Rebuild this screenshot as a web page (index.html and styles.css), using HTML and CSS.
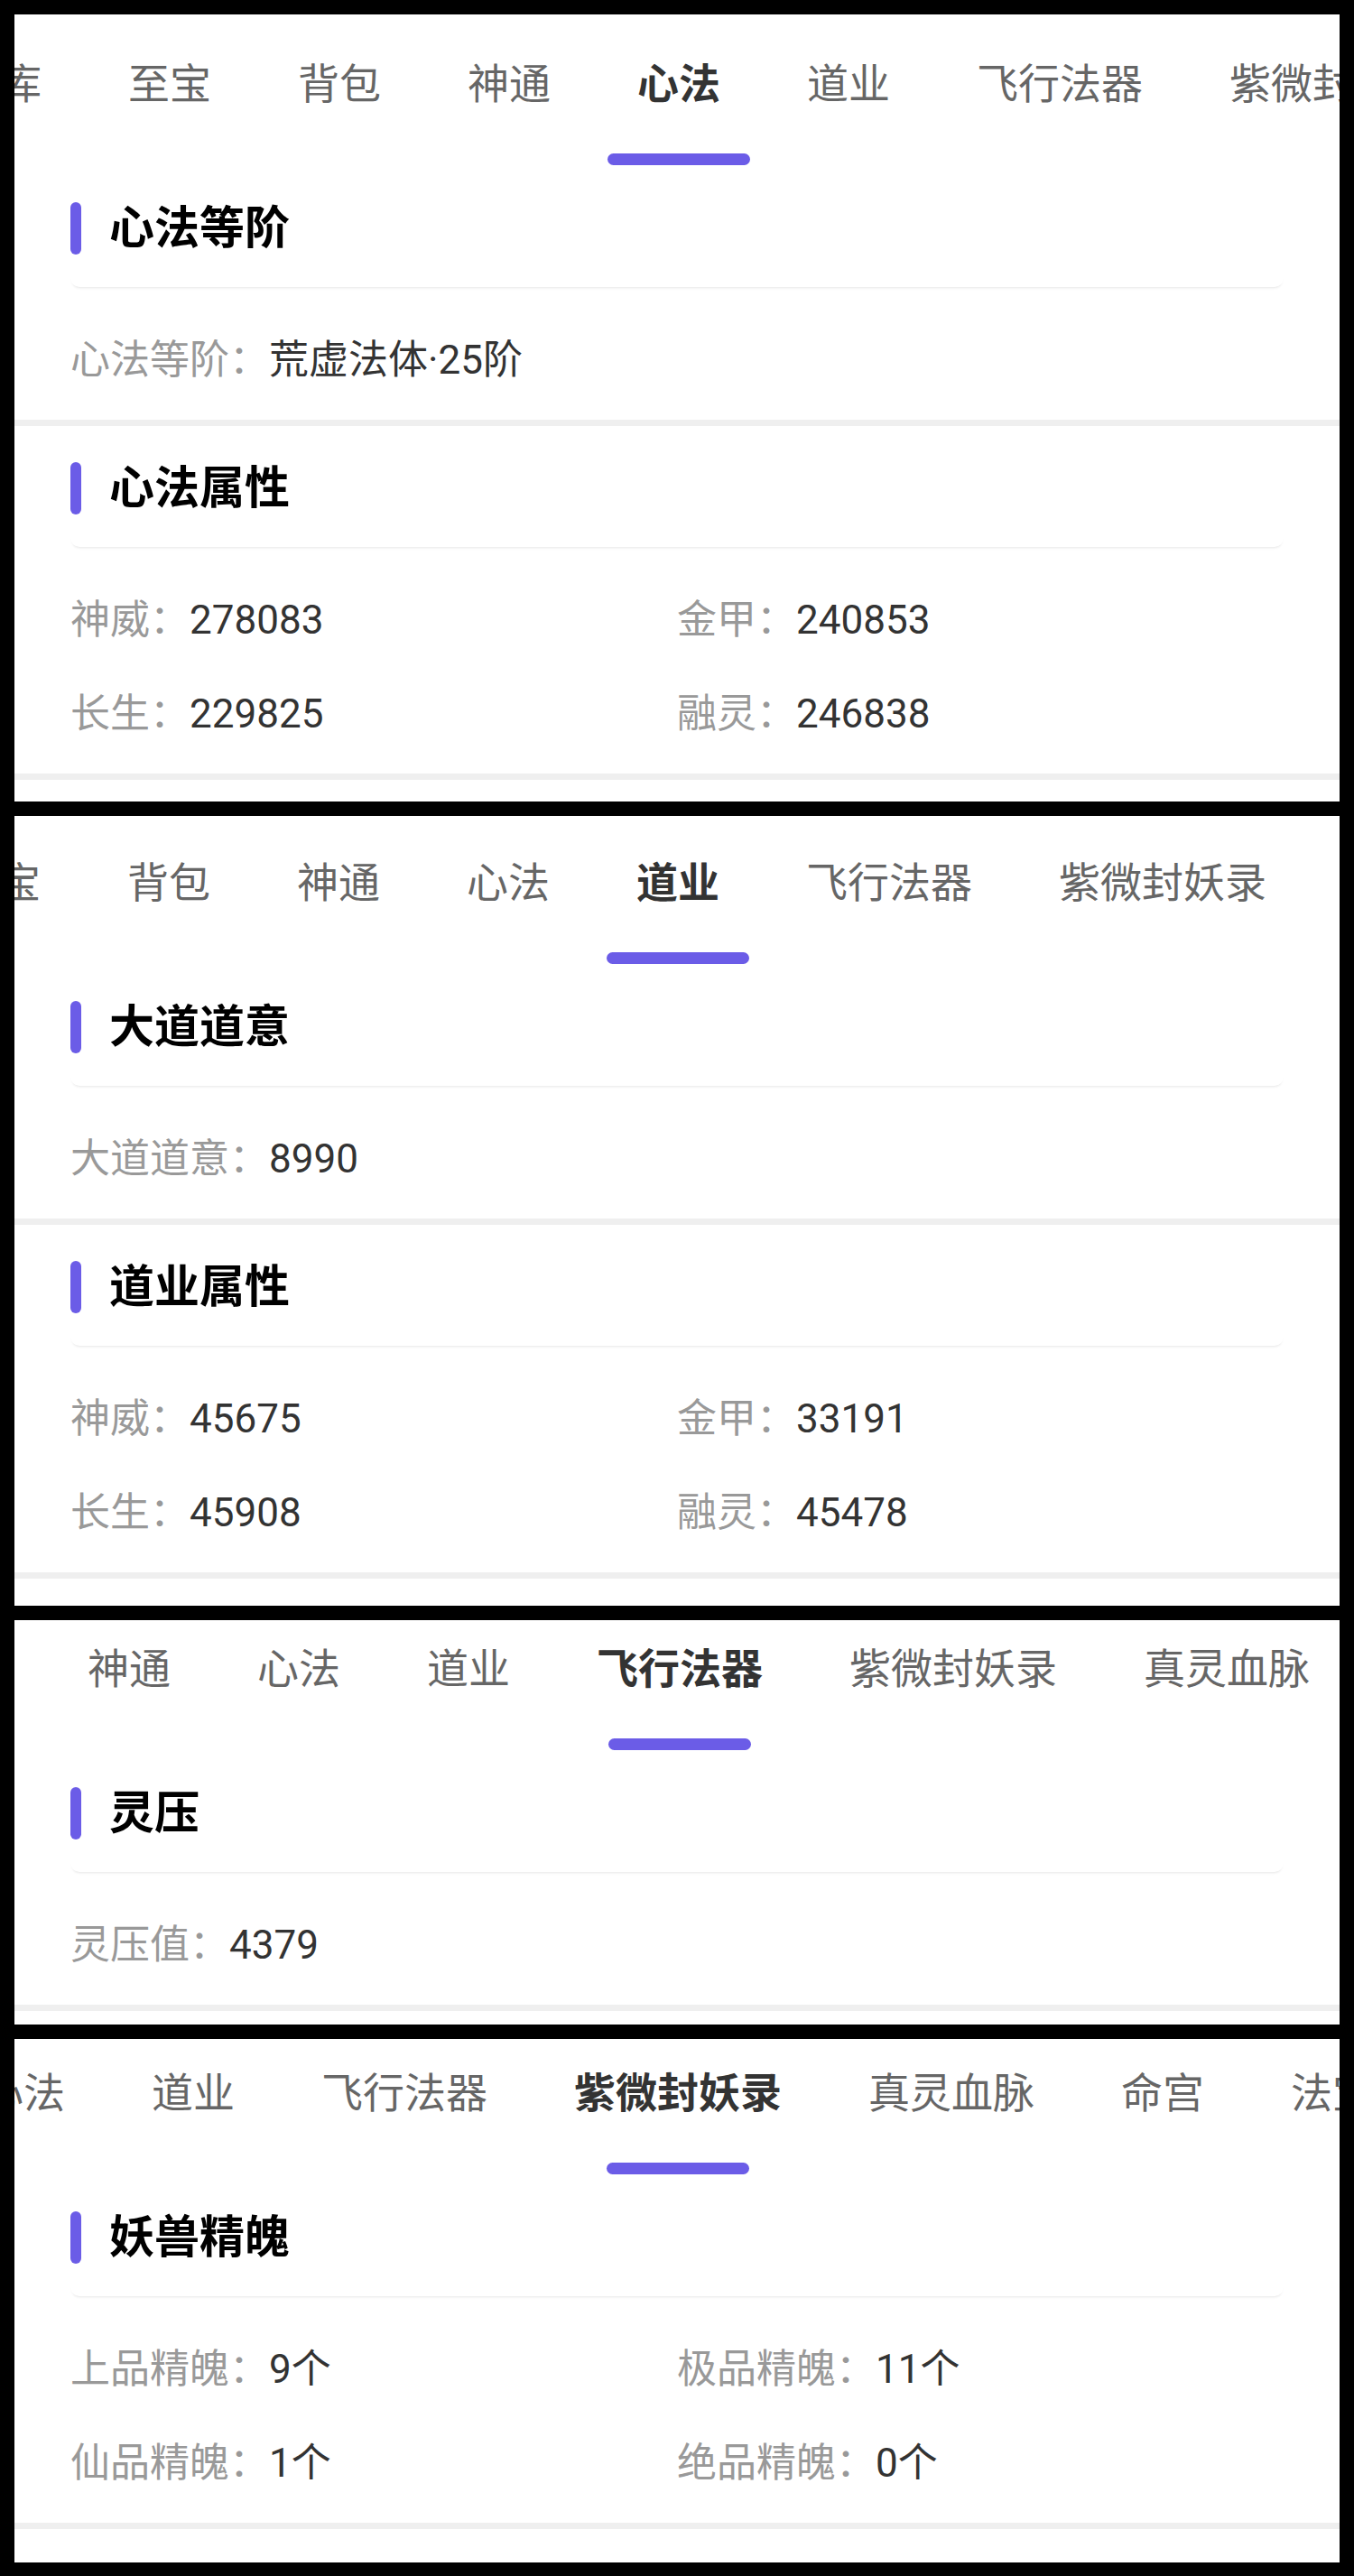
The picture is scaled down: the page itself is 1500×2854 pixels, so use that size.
FILE: index.html
```html
<!DOCTYPE html>
<html lang="zh-CN">
<head>
<meta charset="utf-8">
<title>属性面板</title>
<link rel="stylesheet" href="styles.css">
</head>
<body>
<main class="stack">

  <section class="panel panel--p1">
    <nav class="tabs tabs--p1">
      <span class="tab">宝库</span>
      <span class="tab">至宝</span>
      <span class="tab">背包</span>
      <span class="tab">神通</span>
      <span class="tab tab--active"><span>心法</span><span class="tab__bar"></span></span>
      <span class="tab">道业</span>
      <span class="tab">飞行法器</span>
      <span class="tab">紫微封妖录</span>
      <span class="tab">真灵血脉</span>
    </nav>
    <div class="block">
      <div class="block__head"><span class="block__mark"></span><h2 class="block__title">心法等阶</h2></div>
      <div class="block__body">
        <div class="kv"><span class="kv__k">心法等阶：</span><span class="kv__v">荒虚法体·25阶</span></div>
      </div>
    </div>
    <div class="block">
      <div class="block__head block__head--next"><span class="block__mark"></span><h2 class="block__title">心法属性</h2></div>
      <div class="block__body">
        <div class="kv"><span class="kv__k">神威：</span><span class="kv__v">278083</span></div>
        <div class="kv"><span class="kv__k">金甲：</span><span class="kv__v">240853</span></div>
        <div class="kv"><span class="kv__k">长生：</span><span class="kv__v">229825</span></div>
        <div class="kv"><span class="kv__k">融灵：</span><span class="kv__v">246838</span></div>
      </div>
    </div>
  </section>

  <section class="panel panel--p2">
    <nav class="tabs tabs--p2">
      <span class="tab">宝库</span>
      <span class="tab">至宝</span>
      <span class="tab">背包</span>
      <span class="tab">神通</span>
      <span class="tab">心法</span>
      <span class="tab tab--active"><span>道业</span><span class="tab__bar"></span></span>
      <span class="tab">飞行法器</span>
      <span class="tab">紫微封妖录</span>
      <span class="tab">真灵血脉</span>
    </nav>
    <div class="block">
      <div class="block__head"><span class="block__mark"></span><h2 class="block__title">大道道意</h2></div>
      <div class="block__body">
        <div class="kv"><span class="kv__k">大道道意：</span><span class="kv__v">8990</span></div>
      </div>
    </div>
    <div class="block">
      <div class="block__head block__head--next"><span class="block__mark"></span><h2 class="block__title">道业属性</h2></div>
      <div class="block__body">
        <div class="kv"><span class="kv__k">神威：</span><span class="kv__v">45675</span></div>
        <div class="kv"><span class="kv__k">金甲：</span><span class="kv__v">33191</span></div>
        <div class="kv"><span class="kv__k">长生：</span><span class="kv__v">45908</span></div>
        <div class="kv"><span class="kv__k">融灵：</span><span class="kv__v">45478</span></div>
      </div>
    </div>
  </section>

  <section class="panel panel--p3">
    <nav class="tabs tabs--p3">
      <span class="tab">宝库</span>
      <span class="tab">至宝</span>
      <span class="tab">背包</span>
      <span class="tab">神通</span>
      <span class="tab">心法</span>
      <span class="tab">道业</span>
      <span class="tab tab--active"><span>飞行法器</span><span class="tab__bar"></span></span>
      <span class="tab">紫微封妖录</span>
      <span class="tab">真灵血脉</span>
      <span class="tab">命宫</span>
    </nav>
    <div class="block">
      <div class="block__head"><span class="block__mark"></span><h2 class="block__title">灵压</h2></div>
      <div class="block__body">
        <div class="kv"><span class="kv__k">灵压值：</span><span class="kv__v">4379</span></div>
      </div>
    </div>
  </section>

  <section class="panel panel--p4">
    <nav class="tabs tabs--p4">
      <span class="tab">宝库</span>
      <span class="tab">至宝</span>
      <span class="tab">背包</span>
      <span class="tab">神通</span>
      <span class="tab">心法</span>
      <span class="tab">道业</span>
      <span class="tab">飞行法器</span>
      <span class="tab tab--active"><span>紫微封妖录</span><span class="tab__bar"></span></span>
      <span class="tab">真灵血脉</span>
      <span class="tab">命宫</span>
      <span class="tab">法宝</span>
    </nav>
    <div class="block">
      <div class="block__head"><span class="block__mark"></span><h2 class="block__title">妖兽精魄</h2></div>
      <div class="block__body">
        <div class="kv"><span class="kv__k">上品精魄：</span><span class="kv__v">9个</span></div>
        <div class="kv"><span class="kv__k">极品精魄：</span><span class="kv__v">11个</span></div>
        <div class="kv"><span class="kv__k">仙品精魄：</span><span class="kv__v">1个</span></div>
        <div class="kv"><span class="kv__k">绝品精魄：</span><span class="kv__v">0个</span></div>
      </div>
    </div>
  </section>

</main>
</body>
</html>
```

FILE: styles.css
```css
html, body {
  margin: 0;
  padding: 0;
  background: #000;
}

body {
  font-family: Roboto, "Noto Sans CJK SC", sans-serif;
}

.stack {
  display: flex;
  flex-direction: column;
  gap: 16px;
  padding: 16px 16px 15px;
}

.panel {
  background: #fff;
  overflow: hidden;
}

.panel--p1 { padding-bottom: 24px; }
.panel--p2 { padding-bottom: 30px; }
.panel--p3 { padding-bottom: 15px; }
.panel--p4 { padding-bottom: 37px; }

/* tab strip (horizontally scrolled, active tab centred) */
.tabs {
  display: flex;
  align-items: flex-start;
  white-space: nowrap;
}

.tabs--p1 { padding-top: 45px; margin-left: -110px; }
.tabs--p2 { padding-top: 42px; margin-left: -299px; }
.tabs--p3 { padding-top: 22px; margin-left: -531px; }
.tabs--p4 { padding-top: 28px; margin-left: -836px; }

.tab {
  flex: none;
  display: flex;
  flex-direction: column;
  align-items: center;
  padding: 0 48px;
  font-size: 46px;
  line-height: 64px;
  color: #666;
}

.tab--active {
  color: #333;
  font-weight: 700;
}

/* indicator wider than a 2-char label, but must not widen the tab */
.tab__bar {
  width: 158px;
  height: 13px;
  margin: 45px -60px 0;
  border-radius: 7px;
  background: #6b5ce7;
}

/* section blocks */
.block__head {
  display: flex;
  align-items: center;
  height: 130px;
  margin: 5px 62px 0;
  border-radius: 10px;
  box-shadow: 0 3px 3px -2px rgba(0, 0, 0, 0.1);
}

.block__head--next {
  margin-top: 4px;
}

.block__mark {
  flex: none;
  width: 12px;
  height: 58px;
  border-radius: 6px;
  background: #6b5ce7;
}

.block__title {
  margin: 0 0 0 31px;
  font-size: 50px;
  line-height: 64px;
  font-weight: 700;
  color: #000;
}

.block__body {
  display: grid;
  grid-template-columns: 1fr 1fr;
  row-gap: 40px;
  padding: 49px 62px 34px;
  border-bottom: 7px solid #efefef;
}

.kv {
  font-size: 44px;
  line-height: 64px;
  white-space: nowrap;
}

.kv__k {
  color: #999;
}

.kv__v {
  color: #333;
}
```
